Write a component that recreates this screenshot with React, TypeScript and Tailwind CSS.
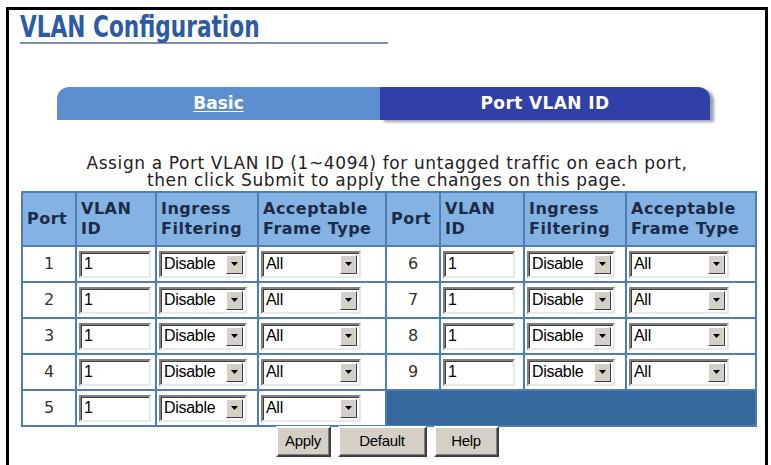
import React from "react"

const left = [1, 2, 3, 4, 5]
const right = [6, 7, 8, 9]

const Arrow = () => (
  <span className="flex h-[19px] w-[17px] items-center justify-center border-[1.5px] border-t-white border-l-white border-r-[#404040] border-b-[#404040] bg-[#d4d0c8]">
    <svg width="7" height="4" viewBox="0 0 7 4">
      <path d="M0 0h7L3.5 4z" fill="#000" />
    </svg>
  </span>
)

const Select = ({ value, width }: { value: string; width: string }) => (
  <div
    className={`flex h-[27px] ${width} items-center justify-between border-2 border-t-[#808080] border-l-[#808080] border-r-[#e8e8e8] border-b-[#e8e8e8] bg-white pr-[2px] pl-[3px] shadow-[inset_1px_1px_0_#404040]`}
  >
    <span className="font-['Liberation_Sans',sans-serif] text-[16px] tracking-[-0.3px] text-black">
      {value}
    </span>
    <Arrow />
  </div>
)

const TextBox = () => (
  <div className="flex h-[27px] w-[72px] items-center border-2 border-t-[#808080] border-l-[#808080] border-r-[#e8e8e8] border-b-[#e8e8e8] bg-white pl-[3px] shadow-[inset_1px_1px_0_#404040] font-['Liberation_Sans',sans-serif] text-[16px] text-black">
    1
  </div>
)

const td = "border-2 border-[#4d7fb6] px-[2px]"
const th =
  "border-2 border-[#4d7fb6] bg-[#84b3e3] px-[4px] text-left align-middle text-[16px] font-bold leading-[20px] tracking-[0.5px] text-[#1b2b48]"

const PortCells = ({ n }: { n: number }) => (
  <>
    <td className={`${td} text-center text-[16px] text-[#333]`}>{n}</td>
    <td className={td}>
      <TextBox />
    </td>
    <td className={td}>
      <Select value="Disable" width="w-[88px]" />
    </td>
    <td className={td}>
      <Select value="All" width="w-[100px]" />
    </td>
  </>
)

const Header = () => (
  <>
    <th className={`${th} text-center`}>Port</th>
    <th className={th}>
      VLAN
      <br />
      ID
    </th>
    <th className={th}>
      Ingress
      <br />
      Filtering
    </th>
    <th className={th}>
      Acceptable
      <br />
      Frame Type
    </th>
  </>
)

const Button = ({ label, width }: { label: string; width: string }) => (
  <button
    className={`h-[31px] ${width} border-2 border-t-white border-l-white border-r-[#404040] border-b-[#404040] bg-[#d4d0c8] font-['Liberation_Sans',sans-serif] text-[15px] tracking-[-0.3px] text-black shadow-[inset_-1px_-1px_0_#808080]`}
  >
    {label}
  </button>
)

export default function App() {
  return (
    <div className="h-[465px] w-[771px] overflow-hidden bg-white pt-[7px] pl-[6px] font-['DejaVu_Sans',sans-serif]">
      <div className="h-[462px] w-[762px] border-[3px] border-black">
        {/* Title */}
        <div className="ml-[11px] mt-[4px] w-[368px] border-b-2 border-[#7c8fb0]">
          <h1 className="h-[28px] origin-left scale-x-[0.86] scale-y-[1.05] font-['DejaVu_Sans_Condensed',sans-serif] text-[28px] leading-[28px] font-bold whitespace-nowrap text-[#2d5aa6]">
            VLAN Configuration
          </h1>
        </div>

        {/* Tabs */}
        <div className="mt-[43px] ml-[48px] flex h-[33px] w-[660px] text-[17px] font-bold text-white">
          <div className="flex w-[323px] items-center justify-center rounded-tl-[12px] bg-[#5b8dcf]">
            <span className="underline underline-offset-2">Basic</span>
          </div>
          <div className="flex w-[330px] items-center justify-center rounded-tr-[12px] bg-[#3040a8] tracking-[0.4px] shadow-[4px_2px_3px_#9aa0b0]">
            Port VLAN ID
          </div>
        </div>

        {/* Description */}
        <p className="mt-[35px] text-center text-[17px] leading-[17px] tracking-[0.6px] whitespace-nowrap text-[#222]">
          Assign a Port VLAN ID (1~4094) for untagged traffic on each port,
          <br />
          then click Submit to apply the changes on this page.
        </p>

        {/* Table */}
        <table className="mt-[2px] ml-[12px] w-[734px] table-fixed border-collapse">
          <colgroup>
            <col className="w-[54px]" />
            <col className="w-[80px]" />
            <col className="w-[102px]" />
            <col className="w-[128px]" />
            <col className="w-[54px]" />
            <col className="w-[84px]" />
            <col className="w-[102px]" />
            <col className="w-[130px]" />
          </colgroup>
          <thead>
            <tr className="h-[54px]">
              <Header />
              <Header />
            </tr>
          </thead>
          <tbody>
            {left.map((n, i) => (
              <tr key={n} className="h-[36px]">
                <PortCells n={n} />
                {right[i] ? (
                  <PortCells n={right[i]} />
                ) : (
                  <td colSpan={4} className="border-2 border-[#4d7fb6] bg-[#36679c]" />
                )}
              </tr>
            ))}
          </tbody>
        </table>

        {/* Buttons */}
        <div className="-mt-[1px] flex justify-center gap-[7px]">
          <Button label="Apply" width="w-[55px]" />
          <Button label="Default" width="w-[89px]" />
          <Button label="Help" width="w-[65px]" />
        </div>
      </div>
    </div>
  )
}
